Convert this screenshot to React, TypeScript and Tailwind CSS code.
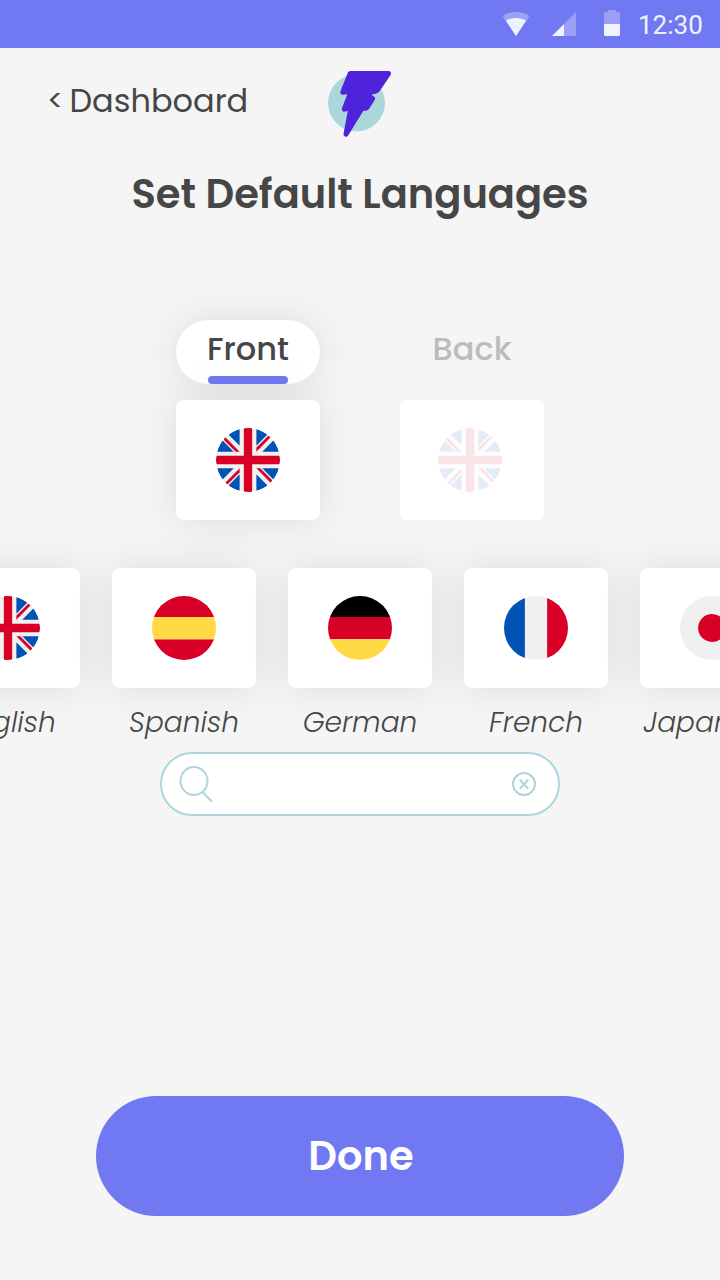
import React from 'react';

const FONT = "font-['Poppins','Inter','Open_Sans',sans-serif]";
const SHADOW = 'shadow-[0_0_40px_rgba(0,0,0,0.1)]';

type FlagName = 'uk' | 'es' | 'de' | 'fr' | 'jp';

function UnitedKingdom() {
  return (
    <>
      <circle cx="256" cy="256" r="256" fill="#F0F0F0" />
      <g fill="#0052B4">
        <path d="M52.92 100.142c-20.109 26.163-35.272 56.318-44.101 89.077h133.178L52.92 100.142z" />
        <path d="M503.181 189.219c-8.829-32.758-23.993-62.913-44.101-89.076l-89.075 89.076h133.176z" />
        <path d="M8.819 322.784c8.83 32.758 23.993 62.913 44.101 89.075l89.074-89.075H8.819z" />
        <path d="M411.858 52.921c-26.163-20.109-56.317-35.272-89.076-44.102v133.177l89.076-89.075z" />
        <path d="M100.142 459.079c26.163 20.109 56.318 35.272 89.076 44.102V370.005l-89.076 89.074z" />
        <path d="M189.217 8.819c-32.758 8.83-62.913 23.993-89.075 44.101l89.075 89.075V8.819z" />
        <path d="M322.783 503.181c32.758-8.83 62.913-23.993 89.075-44.101l-89.075-89.075v133.176z" />
        <path d="M370.005 322.784l89.075 89.076c20.108-26.162 35.272-56.318 44.101-89.076H370.005z" />
      </g>
      <g fill="#D80027">
        <path d="M509.833 222.609H289.392V2.167C278.461.744 267.317 0 256 0c-11.319 0-22.461.744-33.391 2.167v220.441H2.167C.744 233.539 0 244.683 0 256c0 11.319.744 22.461 2.167 33.391h220.441v220.442C233.539 511.256 244.681 512 256 512c11.317 0 22.461-.743 33.391-2.167V289.392h220.442C511.256 278.461 512 267.319 512 256c0-11.317-.744-22.461-2.167-33.391z" />
        <path d="M322.783 322.784L437.019 437.02c5.254-5.252 10.266-10.743 15.048-16.435l-97.802-97.802h-31.482z" />
        <path d="M189.217 322.784h-.002L74.98 437.019c5.252 5.254 10.743 10.266 16.435 15.048l97.802-97.804v-31.479z" />
        <path d="M189.217 189.219v-.002L74.981 74.98c-5.254 5.252-10.266 10.743-15.048 16.435l97.803 97.803h31.481z" />
        <path d="M322.783 189.219L437.02 74.981c-5.252-5.254-10.743-10.266-16.435-15.047l-97.802 97.803v31.482z" />
      </g>
    </>
  );
}

function Flag({ name, className = '' }: { name: FlagName; className?: string }) {
  return (
    <svg viewBox="0 0 512 512" className={`size-16 shrink-0 ${className}`}>
      <clipPath id={`round-${name}`}>
        <circle cx="256" cy="256" r="256" />
      </clipPath>
      <g clipPath={`url(#round-${name})`}>
        {name === 'uk' && <UnitedKingdom />}
        {name === 'es' && (
          <>
            <path fill="#D80027" d="M0 0h512v167H0zM0 345h512v167H0z" />
            <path fill="#FFDA44" d="M0 167h512v178H0z" />
          </>
        )}
        {name === 'de' && (
          <>
            <path fill="#000" d="M0 0h512v167H0z" />
            <path fill="#D80027" d="M0 167h512v178H0z" />
            <path fill="#FFDA44" d="M0 345h512v167H0z" />
          </>
        )}
        {name === 'fr' && (
          <>
            <path fill="#F0F0F0" d="M167 0h178v512H167z" />
            <path fill="#0052B4" d="M0 0h167v512H0z" />
            <path fill="#D80027" d="M345 0h167v512H345z" />
          </>
        )}
        {name === 'jp' && (
          <>
            <path fill="#F0F0F0" d="M0 0h512v512H0z" />
            <circle cx="256" cy="256" r="111.3" fill="#D80027" />
          </>
        )}
      </g>
    </svg>
  );
}

function StatusBar() {
  return (
    <div className="flex h-12 shrink-0 items-center bg-[#7179f2] pl-[502px]">
      <svg className="h-12 w-[120px] shrink-0" viewBox="0 0 120 48" fill="#fff">
        <path fillOpacity=".3" d="M14 36L.6 16.2C8.500 10.600 19.500 10.600 27.400 16.200z" />
        <path fillOpacity=".85" d="M14 36L3.800 20.500C10 17 18 17 24.200 20.500z" />
        <path fillOpacity=".3" d="M74 12v24H50z" />
        <path fillOpacity=".85" d="M62 24v12H50z" />
        <path fillOpacity=".3" d="M102 24V13.500a1.500 1.500 0 0 1 1.500-1.500H106v-2h8v2h2.500a1.500 1.500 0 0 1 1.500 1.500V24z" />
        <path fillOpacity=".9" d="M102 24h16v10.500a1.500 1.500 0 0 1-1.500 1.500h-13a1.500 1.500 0 0 1-1.500-1.500z" />
      </svg>
      <span className="ml-4 pt-[2px] font-['Roboto',sans-serif] text-[26px] leading-[46px] text-white/90">12:30</span>
    </div>
  );
}

function Logo() {
  return (
    <svg className="h-[72px] w-[72px] shrink-0" viewBox="0 0 72 72">
      <circle cx="32.500" cy="34.800" r="28.500" fill="#abd6da" />
      <path
        d="M26.200 5.500H64.500L54 21Q52.500 23.500 50 23.500L46.500 23.800L45 28L48.600 30.500L44 38Q42.800 40.300 40 40.300L38 40.300L22 66.200L27 39.500L20.300 41.200L27.200 23L18.800 24.200Z"
        fill="#4f22dc"
        stroke="#4f22dc"
        strokeWidth="5"
        strokeLinejoin="round"
      />
    </svg>
  );
}

function FlagCard({ flag, raised = true, flagClass }: { flag: FlagName; raised?: boolean; flagClass?: string }) {
  return (
    <div
      className={`flex h-[120px] w-36 shrink-0 items-center justify-center rounded-lg bg-white ${raised ? SHADOW : ''}`}
    >
      <Flag name={flag} className={flagClass} />
    </div>
  );
}

const languages: { flag: FlagName; label: string }[] = [
  { flag: 'uk', label: 'English' },
  { flag: 'es', label: 'Spanish' },
  { flag: 'de', label: 'German' },
  { flag: 'fr', label: 'French' },
  { flag: 'jp', label: 'Japanese' },
];

export default function App() {
  return (
    <div className={`flex h-[1280px] w-[720px] flex-col overflow-hidden bg-[#f5f5f5] text-[#464646] ${FONT}`}>
      <StatusBar />

      <header className="flex h-[104px] shrink-0 pt-[20px] pl-[47px]">
        <a className="flex h-[64px] w-[277px] shrink-0 text-[32px] leading-[65px]">
          <span className="w-[22.500px] shrink-0 text-[30px]">&lt;</span>
          <span>Dashboard</span>
        </a>
        <Logo />
      </header>

      <h1 className="h-[84px] shrink-0 pt-[12px] text-center text-[40px] leading-[60px] font-semibold">
        Set Default Languages
      </h1>

      <section className="mt-[84px] flex shrink-0 justify-center gap-20">
        <div className="flex flex-col gap-4">
          <button
            className={`flex h-16 w-36 flex-col items-center justify-between rounded-full bg-white ${SHADOW}`}
          >
            <span className="pt-[2px] text-[32px] leading-[54px] font-medium">Front</span>
            <span className="h-2 w-20 rounded-full bg-[#7179f2]" />
          </button>
          <FlagCard flag="uk" />
        </div>
        <div className="flex flex-col gap-4">
          <button className="flex h-16 w-36 justify-center">
            <span className="pt-[2px] text-[32px] leading-[54px] font-medium text-[#bcbcbc]">Back</span>
          </button>
          <FlagCard flag="uk" raised={false} flagClass="mr-1 opacity-10" />
        </div>
      </section>

      <section className="mt-12 -ml-16 flex h-[184px] shrink-0 gap-8">
        {languages.map((l) => (
          <div key={l.label} className="flex w-36 shrink-0 flex-col items-center">
            <FlagCard flag={l.flag} />
            <span className="pt-[15px] text-[28px] leading-[40px] font-light italic">{l.label}</span>
          </div>
        ))}
      </section>

      <div className="mx-auto flex h-16 w-[400px] shrink-0 items-center justify-between rounded-full border-2 border-[#abd6da] bg-white pr-[22px] pl-4">
        <svg className="h-10 w-9" viewBox="0 0 36 40" fill="none" stroke="#abd6da" strokeWidth="2">
          <ellipse cx="16" cy="17" rx="13.500" ry="14" />
          <path d="M24.500 28L34 37.800" />
        </svg>
        <svg className="size-6" viewBox="0 0 24 24" fill="none" stroke="#abd6da" strokeWidth="2">
          <circle cx="12" cy="12" r="11" />
          <path d="M7.700 7.700L16.300 16.600M16.300 7.700L7.700 16.600" />
        </svg>
      </div>

      <button className="mx-auto mt-auto mb-16 h-[120px] w-[528px] shrink-0 rounded-full bg-[#7179f2] pt-[1px] pl-[2px] text-[40px] leading-[119px] font-semibold text-white">
        Done
      </button>
    </div>
  );
}
